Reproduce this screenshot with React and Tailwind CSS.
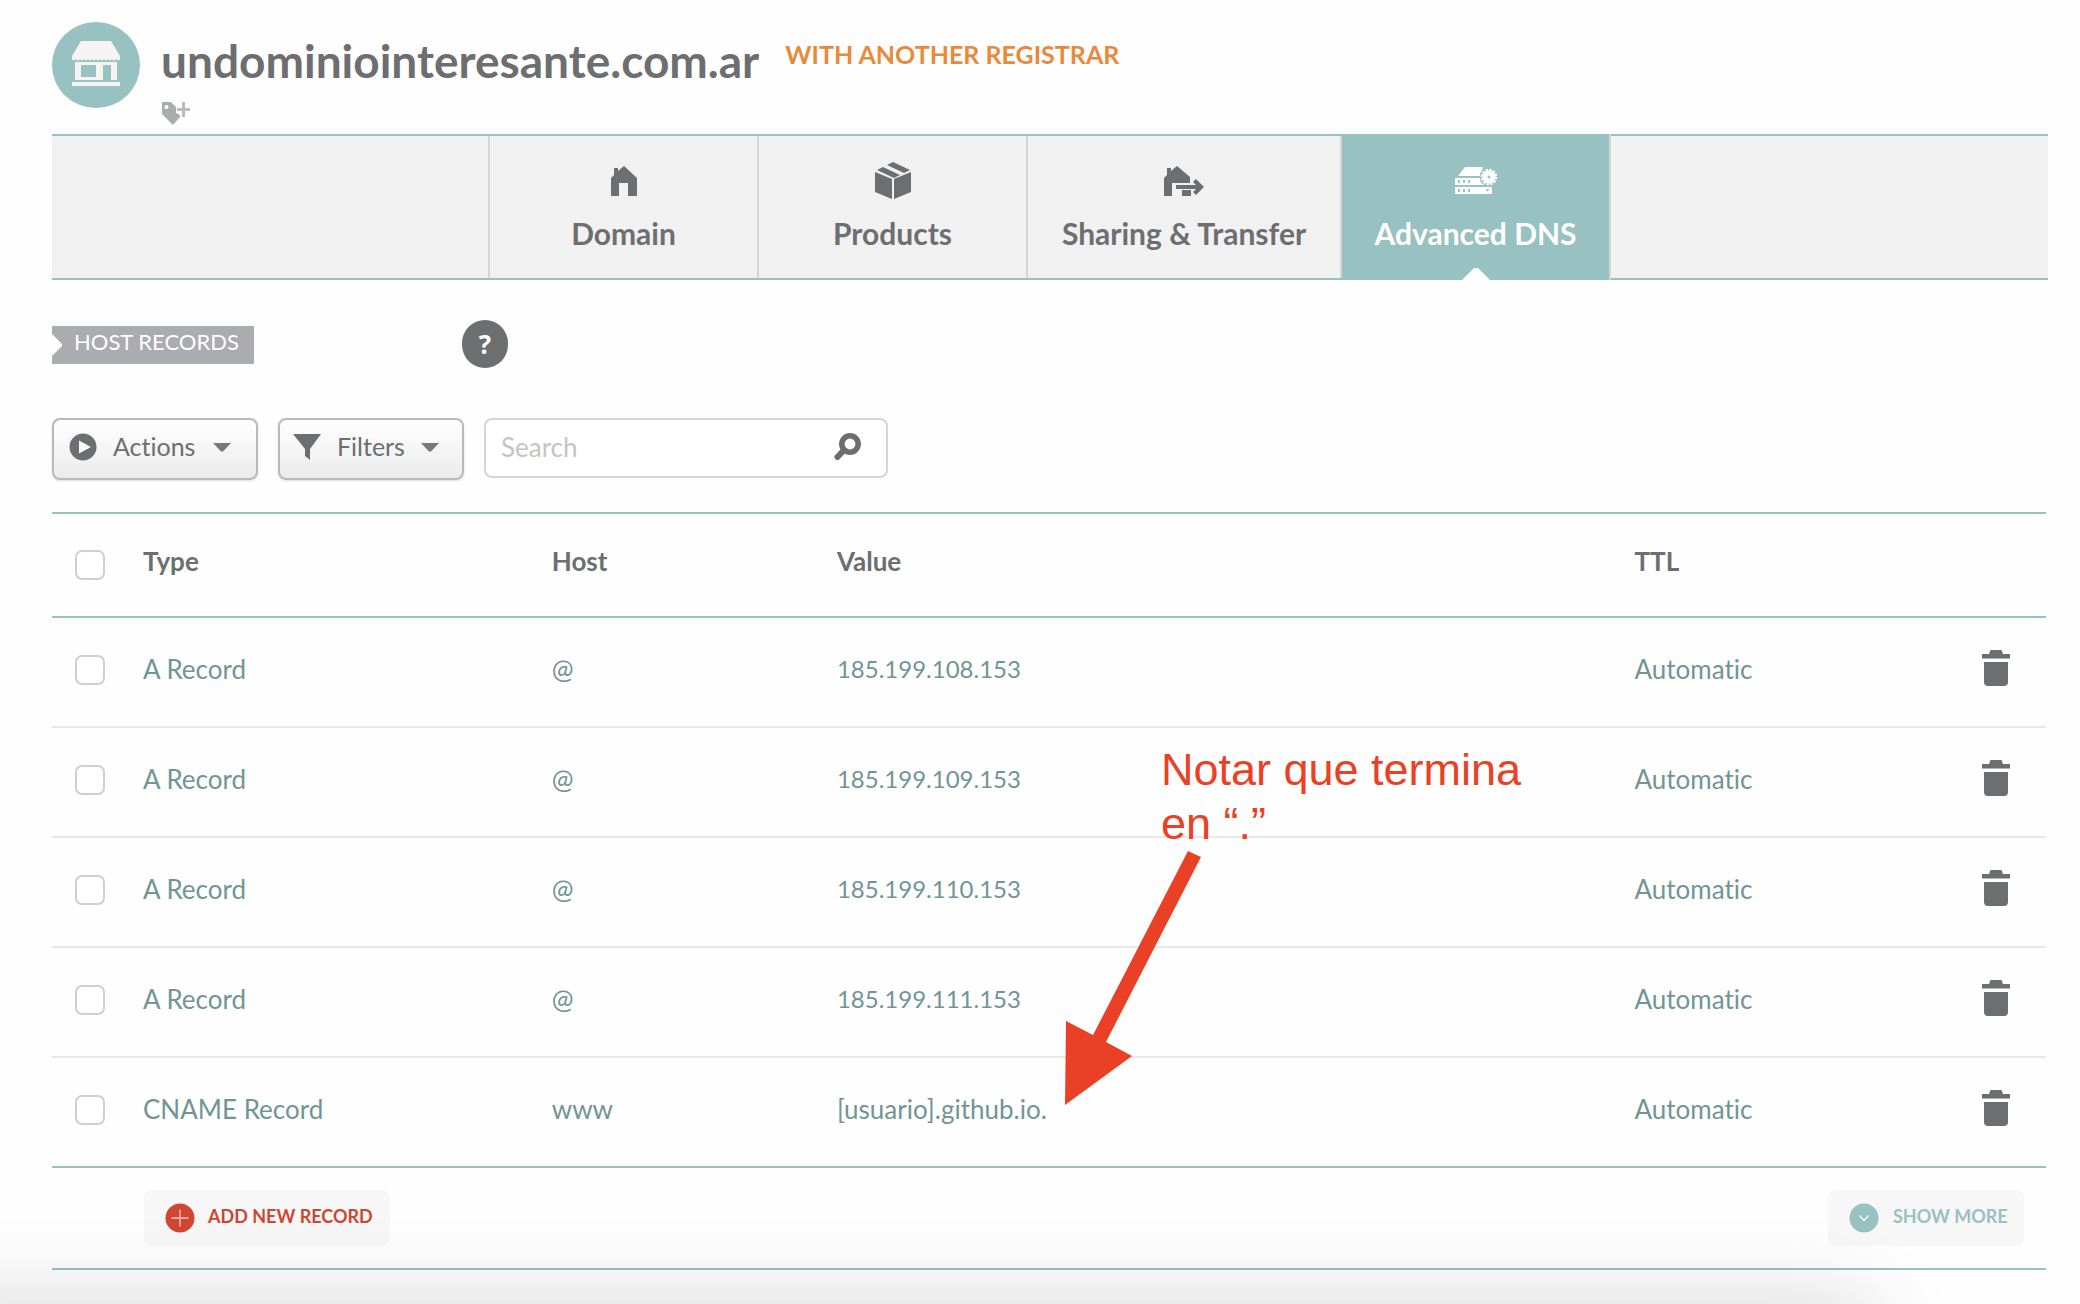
import React from "react";

const records = [
  { type: "A Record", host: "@", value: "185.199.108.153", ttl: "Automatic" },
  { type: "A Record", host: "@", value: "185.199.109.153", ttl: "Automatic" },
  { type: "A Record", host: "@", value: "185.199.110.153", ttl: "Automatic" },
  { type: "A Record", host: "@", value: "185.199.111.153", ttl: "Automatic" },
  { type: "CNAME Record", host: "www", value: "[usuario].github.io.", ttl: "Automatic" },
];

const StoreIcon = () => (
  <svg width="50" height="46" viewBox="0 0 50 46" fill="#f5f4f2" aria-hidden="true">
    <path d="M10 1h30l9 15v3q-2 3-4 0q-2 3-4 0q-2 3-4 0q-2 3-4 0q-2 3-4 0q-2 3-4 0q-2 3-4 0q-2 3-4 0q-2 3-4 0q-2 3-4 0q-2 3-4 0q-2 3-4 0v-3z" />
    <path fillRule="evenodd" d="M4 22h6v18H4zM10 22h36v18h-6V25h-8v15H10zM10 25v12h15V25z" />
    <path d="M1 42h48v4H1z" />
  </svg>
);

const TagPlusIcon = () => (
  <svg width="29" height="24" viewBox="0 0 29 24" aria-hidden="true">
    <path fill="#abacb0" fillRule="evenodd" d="M1 1h9l5 5v6l4 2v2l-7 8L1 13zM5.500 4a2 2 0 1 0 0 4a2 2 0 1 0 0-4z" />
    <path fill="#babbbd" d="M21 1h3v6h5v3h-5v6h-3v-6h-5V7h5z" />
  </svg>
);

const HomeIcon = () => (
  <svg width="28" height="38" viewBox="0 0 28 38" fill="currentColor" aria-hidden="true">
    <path d="M4 6h4v3l6-5 13 12v18h-9V21H9v13H1V16l3-3z" />
  </svg>
);

const BoxIcon = () => (
  <svg width="38" height="38" viewBox="0 0 38 38" fill="currentColor" aria-hidden="true">
    <path d="M1 10l17 7v20L1 30zM37 10l-17 7v20l17-7zM3 8l6-3 17 8-6 3zM13 3l6-3 17 8-6 3z" />
  </svg>
);

const TransferIcon = () => (
  <svg width="42" height="38" viewBox="0 0 42 38" fill="currentColor" aria-hidden="true">
    <path d="M4 6h4v3l6-5 13 11v6H9v13H1V16l3-3zM19 28h9v6h-9z" />
    <path d="M13 23h20l-3-3 3-3 8 8-8 8-3-3 3-3H13z" />
  </svg>
);

const ServerIcon = () => (
  <svg width="44" height="38" viewBox="0 0 44 38" aria-hidden="true">
    <path fill="#fff" d="M11 5h18l-3 9H4zM1 16h25l4 5h8v2H1zM1 25h37v7H1z" />
    <g fill="#98c1c1">
      <path d="M4 18h2v3H4zM9 18h2v3H9zM14 18h2v3h-2zM4 27h2v3H4zM9 27h2v3H9zM14 27h2v3h-2zM32 27h3l-1.500 3z" />
      <circle cx="35" cy="15" r="9.500" />
    </g>
    <circle cx="35" cy="15" r="6.500" fill="#fff" />
    <circle cx="35" cy="15" r="7" fill="none" stroke="#fff" strokeWidth="2.500" strokeDasharray="2.400 1.265" />
    <circle cx="35" cy="15" r="1.500" fill="#98c1c1" />
  </svg>
);

const PlayIcon = () => (
  <svg width="28" height="28" viewBox="0 0 28 28" aria-hidden="true">
    <circle cx="14" cy="14" r="13.500" fill="#6d6e70" />
    <path fill="#fafafa" d="M10 7.500L22 14l-12 6.500z" />
  </svg>
);

const FunnelIcon = () => (
  <svg width="28" height="28" viewBox="0 0 28 28" fill="#6d6e70" aria-hidden="true">
    <path d="M0 1h28L17 16v11l-5-4v-7z" />
  </svg>
);

const Caret = () => (
  <svg width="18" height="9" viewBox="0 0 18 9" fill="#77787a" aria-hidden="true">
    <path d="M0 0h18l-8 8.500h-2z" />
  </svg>
);

const SearchIcon = () => (
  <svg width="28" height="28" viewBox="0 0 28 28" fill="none" stroke="#6d6e70" aria-hidden="true">
    <circle cx="16" cy="11" r="8.200" strokeWidth="5.500" />
    <path d="M10 17l-6.500 7" strokeWidth="6" strokeLinecap="round" />
  </svg>
);

const TrashIcon = () => (
  <svg width="28" height="36" viewBox="0 0 28 36" fill="#6d6e70" aria-hidden="true">
    <path d="M0 4h7l1.500-4h11L21 4h7v4.500H0zM2 12h24v20q0 4-4 4H6q-4 0-4-4z" />
  </svg>
);

const PlusCircle = () => (
  <svg width="30" height="30" viewBox="0 0 30 30" aria-hidden="true">
    <circle cx="15" cy="15" r="14.500" fill="#cd4733" />
    <path d="M15 6.500v17M6.500 15h17" stroke="#f3c3bb" strokeWidth="1.300" />
  </svg>
);

const ChevronCircle = () => (
  <svg width="30" height="30" viewBox="0 0 30 30" aria-hidden="true">
    <circle cx="15" cy="15" r="14.500" fill="#98c1c1" />
    <path d="M10.500 12.500l4.500 5 4.500-5" fill="none" stroke="#fff" strokeWidth="1.300" />
  </svg>
);

function Check({ label }) {
  return (
    <input
      type="checkbox"
      aria-label={label}
      className="block h-[30px] w-[30px] appearance-none rounded-[7px] border-2 border-[#cfcfcf] bg-white checked:bg-[#98c1c1]"
    />
  );
}

function Tab({ icon, label, active, wide }) {
  return (
    <a
      href="#"
      aria-current={active ? "page" : undefined}
      className={
        "relative flex flex-col items-center border-r-2 border-[#d5d5d5] " +
        (wide ? "w-[314px] " : "w-[269px] ") +
        (active ? "-my-0.5 bg-[#98c1c1] pt-[28px] text-white" : "pt-[26px] text-[#6d6e70]")
      }
    >
      {icon}
      <span className="mt-[15px] text-[30px] leading-9 font-bold whitespace-nowrap">{label}</span>
      {active && (
        <svg className="absolute bottom-0" width="28" height="12" viewBox="0 0 28 12" fill="#fff" aria-hidden="true">
          <path d="M0 12L12 0h4l12 12z" />
        </svg>
      )}
    </a>
  );
}

export default function App() {
  return (
    <div className="relative min-h-screen overflow-hidden bg-[#fefefe] pr-8 pl-[52px] font-['Lato',sans-serif] text-[#6d6e70] [font-variant-ligatures:none]">
      <header className="flex h-[134px] items-start pt-[22px]">
        <div className="flex h-[86px] w-[88px] shrink-0 items-center justify-center rounded-[50%] bg-[#98c1c1] pb-1">
          <StoreIcon />
        </div>
        <div className="ml-[21px]">
          <div className="flex items-start gap-[26px]">
            <h1 className="mt-3 text-[46px] leading-[54px] font-bold">undominiointeresante.com.ar</h1>
            <span className="mt-4 text-[25px] leading-8 font-bold text-[#e88a3c]">WITH ANOTHER REGISTRAR</span>
          </div>
          <button type="button" aria-label="Add tag" className="mt-[13px] block">
            <TagPlusIcon />
          </button>
        </div>
      </header>

      <nav className="flex h-[146px] border-y-2 border-[#98c1c1] bg-[#f1f1f1]">
        <div className="w-[438px] border-r-2 border-[#d5d5d5]" />
        <Tab icon={<HomeIcon />} label="Domain" />
        <Tab icon={<BoxIcon />} label="Products" />
        <Tab icon={<TransferIcon />} label="Sharing & Transfer" wide />
        <Tab icon={<ServerIcon />} label="Advanced DNS" active />
      </nav>

      <main className="mr-0.5">
        <div className="flex items-center pt-10">
          <h2 className="relative mt-0.5 h-[38px] w-[202px] bg-[#abacb0] pl-[22px] text-[22px] leading-8 whitespace-nowrap text-white">
            HOST RECORDS
            <svg className="absolute top-2 left-0" width="10" height="22" viewBox="0 0 10 22" fill="#fff" aria-hidden="true">
              <path d="M0 0l10 10v2L0 22z" />
            </svg>
          </h2>
          <button
            type="button"
            aria-label="Help"
            className="ml-[208px] h-12 w-[46px] rounded-[23px] bg-[#6d6e70] font-['Open_Sans',sans-serif] text-[26px] leading-12 font-bold text-white"
          >
            ?
          </button>
        </div>

        <div className="mt-[50px] flex items-start gap-5">
          <button
            type="button"
            className="flex h-[62px] w-[206px] items-center rounded-lg border-2 border-[#b9b9b9] bg-linear-to-b from-white to-[#ebebeb] pb-1 pl-[15px] text-[25px] shadow-sm"
          >
            <PlayIcon />
            <span className="mr-[18px] ml-4">Actions</span>
            <Caret />
          </button>
          <button
            type="button"
            className="flex h-[62px] w-[186px] items-center rounded-lg border-2 border-[#b9b9b9] bg-linear-to-b from-white to-[#ebebeb] pb-1 pl-[13px] text-[25px] shadow-sm"
          >
            <FunnelIcon />
            <span className="mr-4 ml-4">Filters</span>
            <Caret />
          </button>
          <form className="flex h-[60px] w-[404px] items-center rounded-lg border-2 border-[#d5d5d5] bg-white pr-6 pb-0.5 pl-[15px]">
            <input
              type="search"
              aria-label="Search"
              placeholder="Search"
              className="min-w-0 flex-1 bg-transparent text-[26px] outline-none placeholder:text-[#c4c4c4]"
            />
            <button type="button" aria-label="Run search">
              <SearchIcon />
            </button>
          </form>
        </div>

        <div className="relative mt-8">
          <table className="w-full table-fixed border-collapse text-left text-[26px]">
            <colgroup>
              <col className="w-[91px]" />
              <col className="w-[20.5%]" />
              <col className="w-[14.3%]" />
              <col className="w-[40%]" />
              <col />
              <col className="w-16" />
            </colgroup>
            <thead>
              <tr className="h-[104px] border-y-2 border-[#98c1c1]">
                <th className="pl-[23px]">
                  <Check label="Select all records" />
                </th>
                <th className="pb-2 font-bold">Type</th>
                <th className="pb-2 font-bold">Host</th>
                <th className="pb-2 font-bold">Value</th>
                <th className="pb-2 font-bold">TTL</th>
                <th />
              </tr>
            </thead>
            <tbody className="text-[#719594]">
              {records.map((r, i) => (
                <tr key={i} className="h-[110px] border-b-2 border-[#e8e8e8] last:border-[#98c1c1]">
                  <td className="pb-1 pl-[23px]">
                    <Check label={`Select ${r.type} ${r.value}`} />
                  </td>
                  <td className="pb-1.5">{r.type}</td>
                  <td className="pb-1.5">{r.host}</td>
                  <td className={r.type === "A Record" ? "pb-1.5 text-[24px]" : "pb-1.5"}>{r.value}</td>
                  <td className="pb-1.5">{r.ttl}</td>
                  <td className="pb-2">
                    <button type="button" aria-label={`Delete ${r.value}`} className="block">
                      <TrashIcon />
                    </button>
                  </td>
                </tr>
              ))}
            </tbody>
          </table>

          <div className="pointer-events-none absolute top-[231px] left-[50.8%] text-[#ea4025]">
            <p className="ml-24 font-['Liberation_Sans',sans-serif] text-[45px] leading-[54px] whitespace-nowrap">
              Notar que termina
              <br />
              en “.”
            </p>
            <svg width="137" height="255" viewBox="0 0 137 255" fill="currentColor" aria-hidden="true">
              <path d="M123 0L136 6L41 191L67 205L0 254L1 170L28 184Z" />
            </svg>
          </div>
        </div>

        <div className="flex h-[102px] items-center justify-between border-b-2 border-[#98c1c1] pr-[22px] pl-[92px]">
          <button
            type="button"
            className="flex h-14 w-[246px] items-center gap-[13px] rounded-lg bg-[#f7f7f7] pl-[21px] text-[18px] font-bold whitespace-nowrap text-[#cd4733]"
          >
            <PlusCircle />
            <span className="pb-1">ADD NEW RECORD</span>
          </button>
          <button
            type="button"
            className="flex h-14 w-[196px] items-center gap-[14px] rounded-lg bg-[#f7f7f7] pl-[21px] text-[18px] font-bold whitespace-nowrap text-[#98c1c1]"
          >
            <ChevronCircle />
            <span className="pb-1">SHOW MORE</span>
          </button>
        </div>
      </main>

      <div className="pointer-events-none absolute top-full right-[210px] -left-24 h-40 shadow-[0_0_90px_rgba(0,0,0,0.16)]" />
    </div>
  );
}
